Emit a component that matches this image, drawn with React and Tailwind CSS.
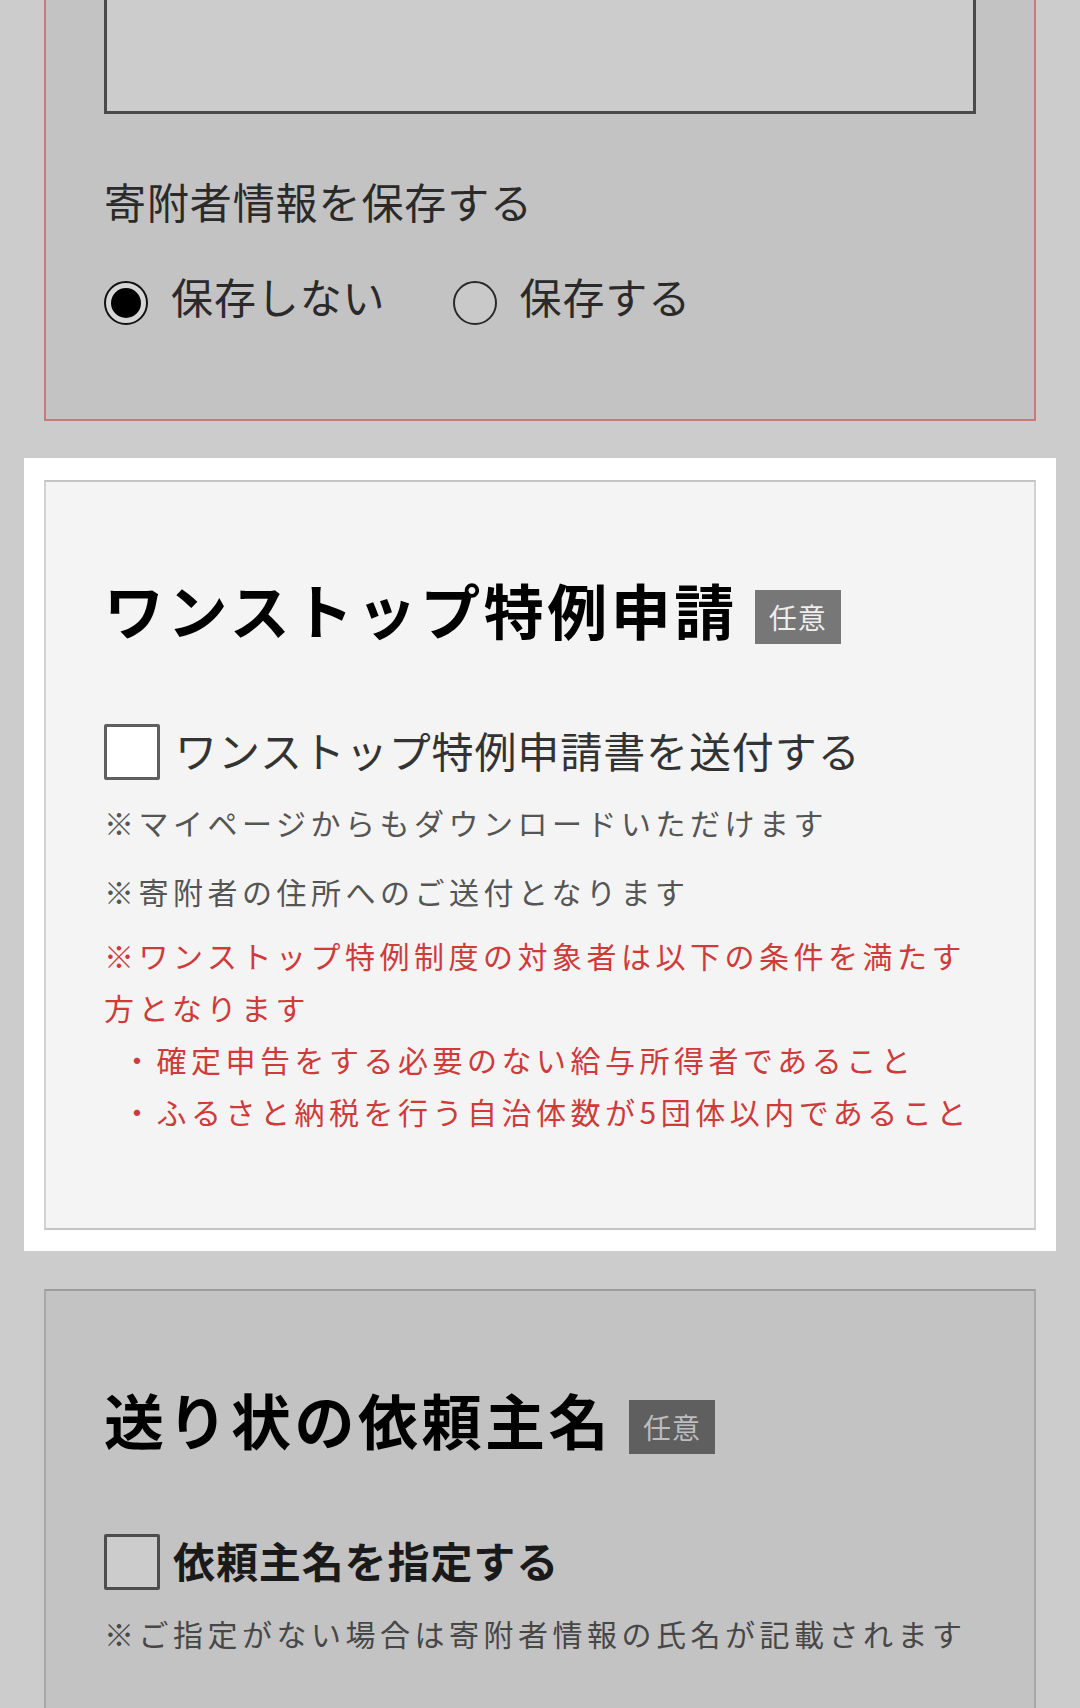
const Badge = ({ dim }) => (
  <span
    className={
      dim
        ? 'ml-[17px] mt-[8px] inline-block h-[54px] bg-[#5f5f5f] px-[14px] text-[28px] leading-[54px] tracking-[1px] text-[#bdbdbd]'
        : 'ml-[17px] mt-[8px] inline-block h-[54px] bg-[#777777] px-[14px] text-[28px] leading-[54px] tracking-[1px] text-[#eeeeee]'
    }
  >
    任意
  </span>
);

const Radio = ({ checked }) =>
  checked ? (
    <span className="flex h-[44px] w-[44px] shrink-0 items-center justify-center rounded-full border-[2px] border-[#111] bg-[#d6d6d6]">
      <span className="h-[30px] w-[30px] rounded-full bg-black" />
    </span>
  ) : (
    <span className="block h-[44px] w-[44px] shrink-0 rounded-full border-[2px] border-[#2a2a2a] bg-[#c9c9c9]" />
  );

export default function App() {
  return (
    <div className="h-[1708px] overflow-hidden bg-[#cccccc] font-['Noto_Sans_CJK_JP','Noto_Sans',sans-serif]">
      {/* 寄附者情報 (dimmed, red border) */}
      <section className="mx-[44px] -mt-[228px] border-2 border-[#c87a7a] bg-[#c3c3c3] px-[58px] pt-[40px] pb-[86px]">
        <div className="h-[300px] border-[3px] border-[#4a4a4a] bg-[#cccccc]" />
        <p className="mt-[57px] text-[42px] leading-[60px] tracking-[0.9px] text-[#2a2a2a]">
          寄附者情報を保存する
        </p>
        <div className="mt-[42px] flex h-[60px] items-center text-[42px] tracking-[0.9px] text-[#2a2a2a]">
          <Radio checked />
          <span className="ml-[23px] mb-[16px]">保存しない</span>
          <span className="ml-[67px]">
            <Radio />
          </span>
          <span className="ml-[23px] mb-[16px]">保存する</span>
        </div>
      </section>

      {/* highlighted: ワンストップ特例申請 */}
      <div className="mx-[24px] mt-[37px] bg-white px-[20px] pt-[22px] pb-[21px]">
        <section className="border-2 border-[#d2d2d2] border-t-[#c4c4c4] border-b-[#c4c4c4] bg-[#f4f4f4] px-[58px] pt-[91px] pb-[91px]">
          <div className="flex h-[80px] items-center">
            <h2 className="mb-[8px] text-[60px] font-bold leading-[80px] tracking-[3.5px] text-black">
              ワンストップ特例申請
            </h2>
            <Badge />
          </div>
          <label className="mt-[71px] flex h-[56px] items-center">
            <span className="h-[56px] w-[56px] shrink-0 rounded-[2px] border-[3px] border-[#5f5f5f] bg-white" />
            <span className="ml-[15px] mb-[6px] text-[42px] tracking-[0.9px] text-[#333]">
              ワンストップ特例申請書を送付する
            </span>
          </label>
          <p className="mt-[15px] text-[30px] leading-[54px] tracking-[4.5px] text-[#555]">
            ※マイページからもダウンロードいただけます
          </p>
          <p className="mt-[15px] text-[30px] leading-[54px] tracking-[4.5px] text-[#555]">
            ※寄附者の住所へのご送付となります
          </p>
          <div className="mt-[11px] text-[30px] leading-[52px] tracking-[4.5px] text-[#cf3a3a]">
            <p>※ワンストップ特例制度の対象者は以下の条件を満たす方となります</p>
            <ul className="pl-[18px]">
              <li>・確定申告をする必要のない給与所得者であること</li>
              <li>・ふるさと納税を行う自治体数が5団体以内であること</li>
            </ul>
          </div>
        </section>
      </div>

      {/* 送り状の依頼主名 (dimmed) */}
      <section className="mx-[44px] mt-[38px] border-2 border-[#a8a8a8] border-t-[#9c9c9c] bg-[#c3c3c3] px-[58px] pt-[92px] pb-[200px]">
        <div className="flex h-[80px] items-center">
          <h2 className="mb-[8px] text-[60px] font-bold leading-[80px] tracking-[3.5px] text-black">
            送り状の依頼主名
          </h2>
          <Badge dim />
        </div>
        <label className="mt-[71px] flex h-[56px] items-center">
          <span className="h-[56px] w-[56px] shrink-0 rounded-[2px] border-[3px] border-[#4d4d4d] bg-[#cccccc]" />
          <span className="ml-[13px] mb-[6px] text-[42px] font-bold tracking-[0.9px] text-[#1a1a1a]">
            依頼主名を指定する
          </span>
        </label>
        <p className="mt-[16px] text-[30px] leading-[54px] tracking-[4.5px] text-[#474747]">
          ※ご指定がない場合は寄附者情報の氏名が記載されます
        </p>
      </section>
    </div>
  );
}
